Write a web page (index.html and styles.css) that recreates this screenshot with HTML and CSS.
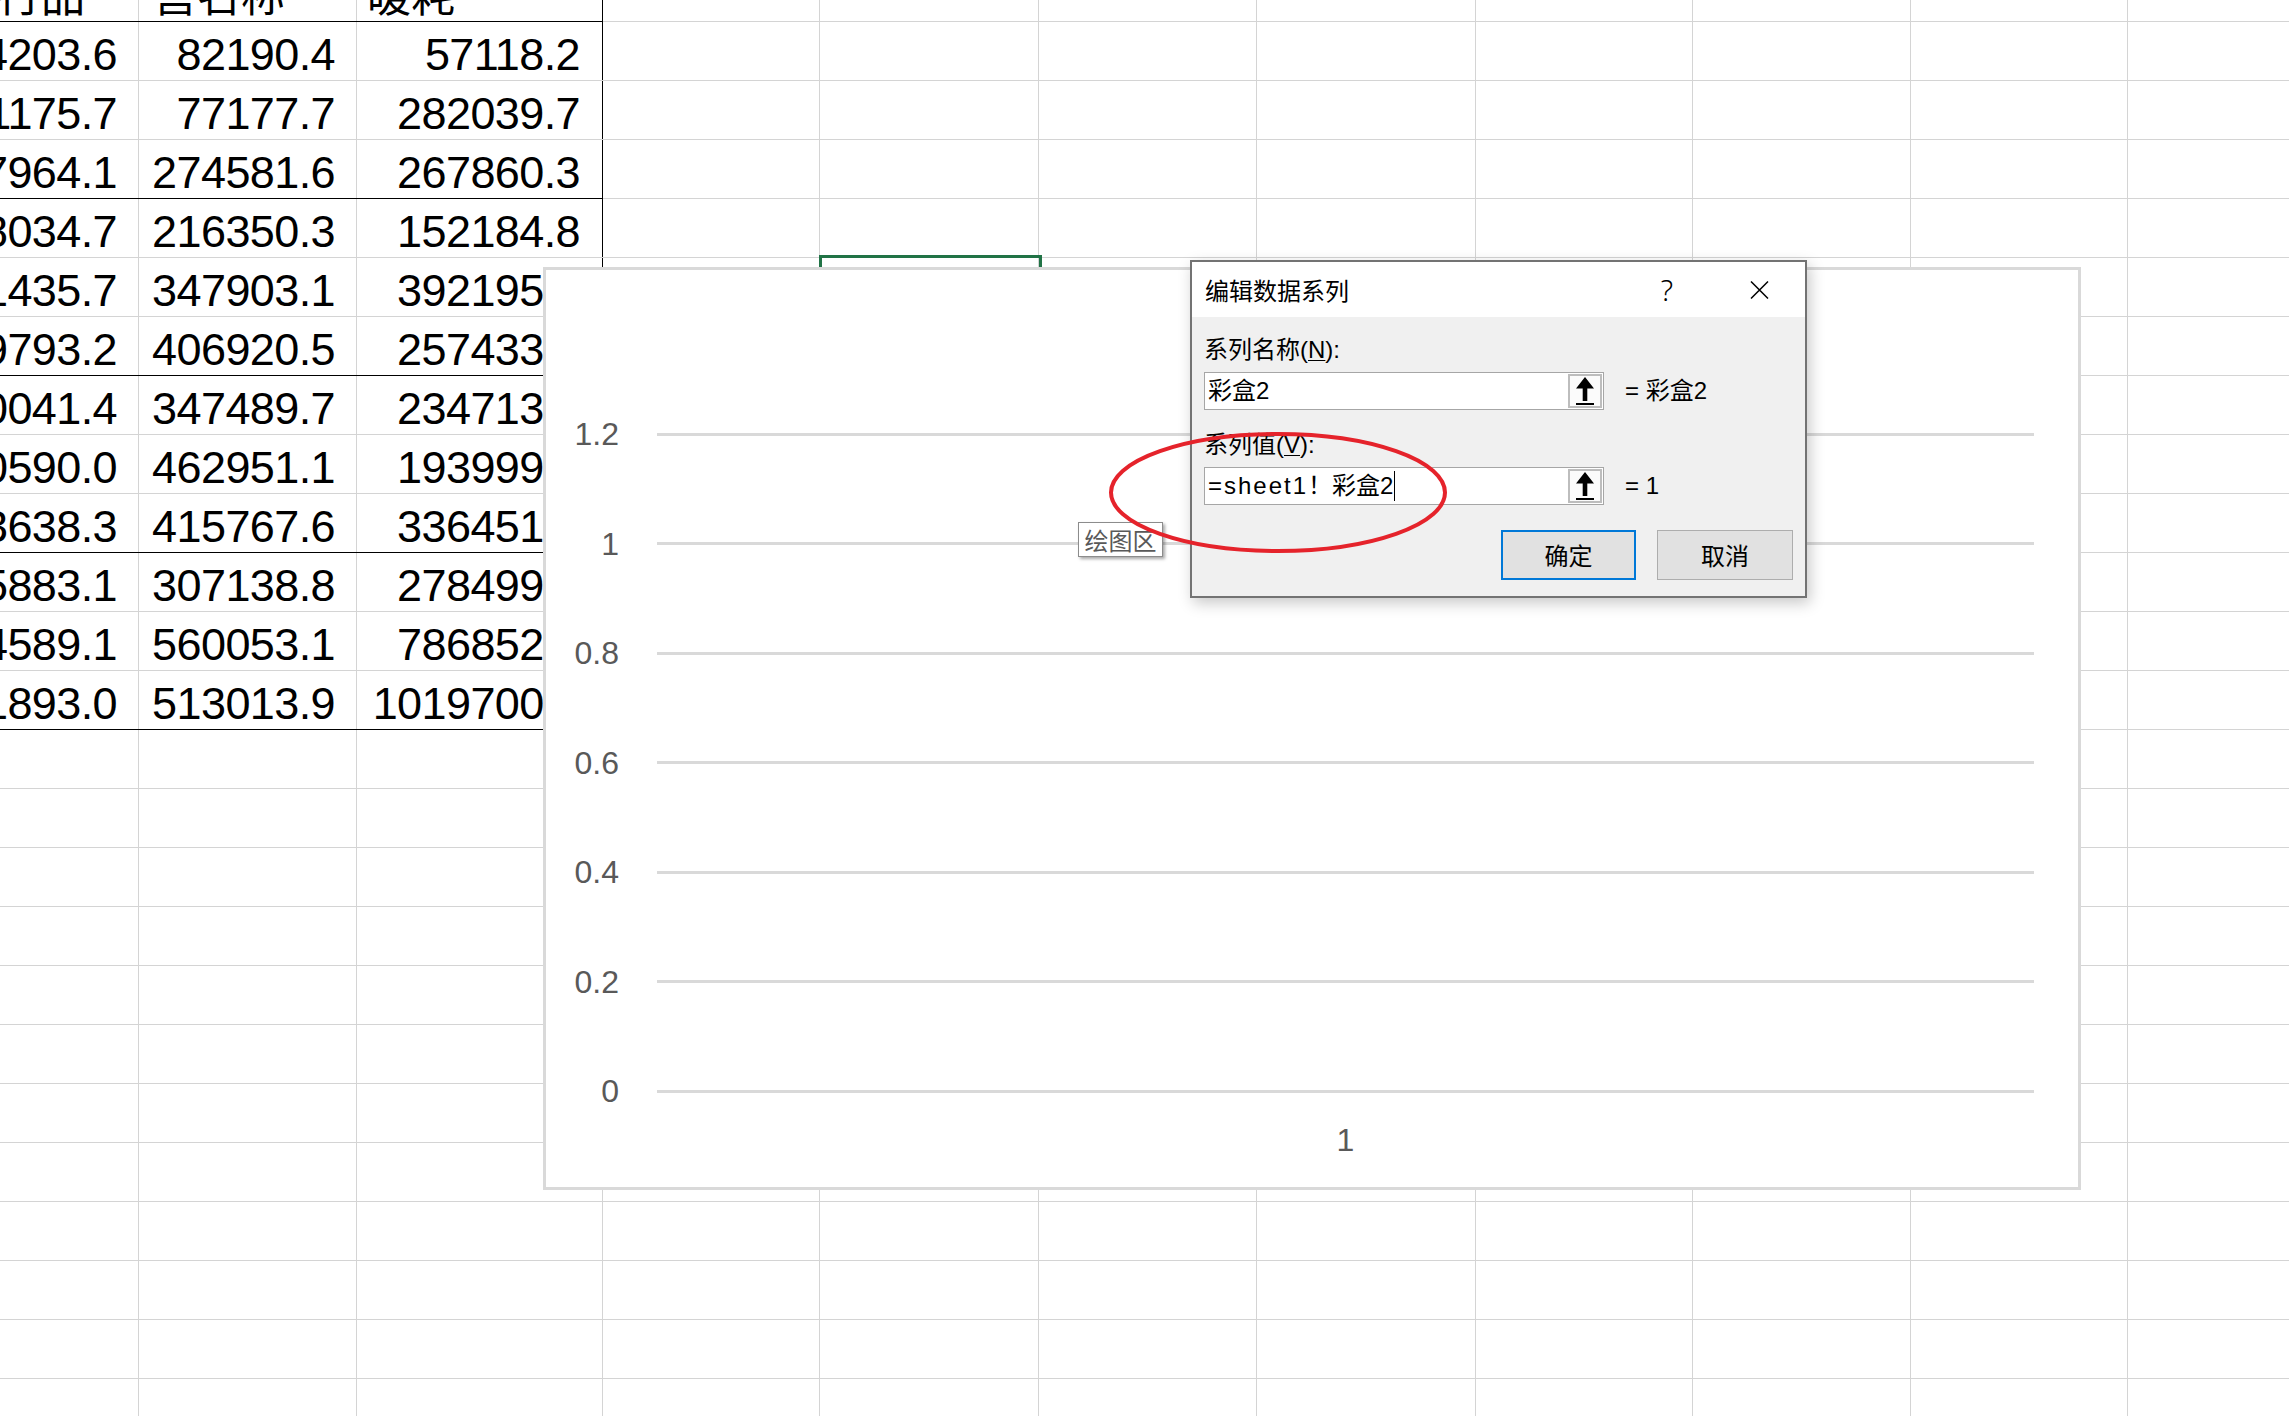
FILE: index.html
```html
<!DOCTYPE html>
<html lang="zh-CN">
<head>
<meta charset="utf-8">
<title>编辑数据系列</title>
<link rel="stylesheet" href="styles.css">
</head>
<body>
<main class="sheet">
  <div class="table">
    <div class="row sep">
      <div class="cell hd hd-a">发行品</div>
      <div class="cell hd hd-b">营名称</div>
      <div class="cell hd hd-c">暖耗</div>
    </div>
    <div class="row"><div class="cell">134203.6</div><div class="cell">82190.4</div><div class="cell">57118.2</div></div>
    <div class="row"><div class="cell">101175.7</div><div class="cell">77177.7</div><div class="cell">282039.7</div></div>
    <div class="row sep"><div class="cell">127964.1</div><div class="cell">274581.6</div><div class="cell">267860.3</div></div>
    <div class="row"><div class="cell">138034.7</div><div class="cell">216350.3</div><div class="cell">152184.8</div></div>
    <div class="row"><div class="cell">171435.7</div><div class="cell">347903.1</div><div class="cell">392195.2</div></div>
    <div class="row sep"><div class="cell">159793.2</div><div class="cell">406920.5</div><div class="cell">257433.8</div></div>
    <div class="row"><div class="cell">180041.4</div><div class="cell">347489.7</div><div class="cell">234713.5</div></div>
    <div class="row"><div class="cell">190590.0</div><div class="cell">462951.1</div><div class="cell">193999.6</div></div>
    <div class="row sep"><div class="cell">183638.3</div><div class="cell">415767.6</div><div class="cell">336451.9</div></div>
    <div class="row"><div class="cell">165883.1</div><div class="cell">307138.8</div><div class="cell">278499.4</div></div>
    <div class="row"><div class="cell">214589.1</div><div class="cell">560053.1</div><div class="cell">786852.7</div></div>
    <div class="row sep"><div class="cell">231893.0</div><div class="cell">513013.9</div><div class="cell">1019700.1</div></div>
  </div>
  <div class="selection"></div>
</main>

<section class="chart">
  <div class="plot">
    <div class="tick"><span class="tick-label">1.2</span><span class="tick-line"></span></div>
    <div class="tick"><span class="tick-label">1</span><span class="tick-line"></span></div>
    <div class="tick"><span class="tick-label">0.8</span><span class="tick-line"></span></div>
    <div class="tick"><span class="tick-label">0.6</span><span class="tick-line"></span></div>
    <div class="tick"><span class="tick-label">0.4</span><span class="tick-line"></span></div>
    <div class="tick"><span class="tick-label">0.2</span><span class="tick-line"></span></div>
    <div class="tick"><span class="tick-label">0</span><span class="tick-line"></span></div>
    <div class="category">1</div>
  </div>
  <div class="plot-tag">绘图区</div>
</section>

<section class="dialog">
  <header class="dlg-title">
    <h1>编辑数据系列</h1>
    <span class="help">?</span>
    <span class="close"><svg width="19" height="18" viewBox="0 0 19 18"><path d="M1 0.5L18 17.5M18 0.5L1 17.5" stroke="#000" stroke-width="1.5" fill="none"/></svg></span>
  </header>
  <div class="dlg-body">
    <div class="dlg-label">系列名称(<u>N</u>):</div>
    <div class="field-row">
      <div class="field">
        <span class="field-text">彩盒2</span>
        <span class="ref-btn"><svg width="30" height="30" viewBox="0 0 30 30"><path d="M15 1L24 12.5H17.3V25H12.7V12.5H6Z" fill="#000"/><rect x="6" y="27" width="18" height="2" fill="#000"/></svg></span>
      </div>
      <span class="field-eq">= 彩盒2</span>
    </div>
    <div class="dlg-label dlg-label-2">系列值(<u>V</u>):</div>
    <div class="field-row">
      <div class="field">
        <span class="field-text"><span class="ref">=sheet1</span>！彩盒2<span class="caret"></span></span>
        <span class="ref-btn"><svg width="30" height="30" viewBox="0 0 30 30"><path d="M15 1L24 12.5H17.3V25H12.7V12.5H6Z" fill="#000"/><rect x="6" y="27" width="18" height="2" fill="#000"/></svg></span>
      </div>
      <span class="field-eq">= 1</span>
    </div>
    <div class="dlg-buttons">
      <button class="btn btn-primary">确定</button>
      <button class="btn">取消</button>
    </div>
  </div>
</section>

<svg class="annotation" width="345" height="128" viewBox="0 0 345 128"><ellipse cx="172" cy="63.5" rx="167" ry="58.5" fill="none" stroke="#e5232b" stroke-width="4"/></svg>
</body>
</html>
```

FILE: styles.css
```css
html, body {
  margin: 0;
  padding: 0;
}

body {
  position: relative;
  width: 2289px;
  height: 1416px;
  overflow: hidden;
  background: #ffffff;
  font-family: "Liberation Sans", "Noto Sans CJK SC", sans-serif;
  color: #000;
}

/* ---------- spreadsheet ---------- */
.sheet {
  position: relative;
  margin-top: -37px;
  height: 1453px;
  background:
    linear-gradient(#d4d4d4, #d4d4d4) 138px 0 / 1px 100% no-repeat,
    linear-gradient(#d4d4d4, #d4d4d4) 356px 0 / 1px 100% no-repeat,
    linear-gradient(#d4d4d4, #d4d4d4) 602px 0 / 1px 100% no-repeat,
    linear-gradient(#d4d4d4, #d4d4d4) 819px 0 / 1px 100% no-repeat,
    linear-gradient(#d4d4d4, #d4d4d4) 1038px 0 / 1px 100% no-repeat,
    linear-gradient(#d4d4d4, #d4d4d4) 1256px 0 / 1px 100% no-repeat,
    linear-gradient(#d4d4d4, #d4d4d4) 1475px 0 / 1px 100% no-repeat,
    linear-gradient(#d4d4d4, #d4d4d4) 1692px 0 / 1px 100% no-repeat,
    linear-gradient(#d4d4d4, #d4d4d4) 1910px 0 / 1px 100% no-repeat,
    linear-gradient(#d4d4d4, #d4d4d4) 2127px 0 / 1px 100% no-repeat,
    repeating-linear-gradient(to bottom, transparent 0, transparent 58px, #d4d4d4 58px, #d4d4d4 59px);
}

.table {
  display: flex;
  flex-direction: column;
  width: 603px;
}

.row {
  display: grid;
  grid-template-columns: 139px 218px 246px;
  height: 59px;
  box-sizing: border-box;
  border-bottom: 1px solid transparent;
}

.row.sep {
  border-bottom-color: #000;
}

.cell {
  display: flex;
  align-items: flex-end;
  justify-content: flex-end;
  box-sizing: border-box;
  padding: 0 22px 3px 0;
  font-size: 45px;
  line-height: 45px;
  letter-spacing: -0.6px;
  white-space: nowrap;
  min-width: 0;
}

.row .cell:last-child {
  border-right: 1px solid #000;
}

.hd {
  font-family: "Noto Sans CJK SC", sans-serif;
  font-size: 44px;
  line-height: 44px;
  letter-spacing: 0;
  padding-bottom: 6px;
}

.hd-a {
  justify-content: flex-end;
  padding-right: 54px;
}

.hd-b {
  justify-content: flex-start;
  padding-left: 14px;
  padding-right: 0;
}

.hd-c {
  justify-content: flex-start;
  padding-left: 10px;
  padding-right: 0;
}

.selection {
  position: absolute;
  left: 819px;
  top: 292px;
  width: 223px;
  height: 70px;
  box-sizing: border-box;
  border: 3px solid #217346;
}

/* ---------- chart ---------- */
.chart {
  position: absolute;
  left: 543px;
  top: 267px;
  width: 1538px;
  height: 923px;
  box-sizing: border-box;
  border: 3px solid #d9d9d9;
  background: #fff;
}

.plot {
  padding-top: 109.25px;
}

.tick {
  display: flex;
  align-items: center;
  height: 109.5px;
}

.tick-label {
  width: 73px;
  text-align: right;
  font-size: 32px;
  line-height: 32px;
  color: #595959;
}

.tick-line {
  margin-left: 38px;
  width: 1377px;
  height: 3px;
  background: #d9d9d9;
}

.category {
  margin-top: -22px;
  margin-left: 111px;
  width: 1377px;
  text-align: center;
  font-size: 32px;
  line-height: 32px;
  color: #595959;
}

.plot-tag {
  position: absolute;
  left: 532px;
  top: 252px;
  width: 85px;
  height: 35px;
  box-sizing: border-box;
  border: 1px solid #8c8c8c;
  background: #fff;
  box-shadow: 2px 2px 3px rgba(0, 0, 0, 0.35);
  font-family: "Noto Sans CJK SC", sans-serif;
  font-size: 24px;
  line-height: 33px;
  text-align: center;
  color: #595959;
}

/* ---------- dialog ---------- */
.dialog {
  position: absolute;
  left: 1190px;
  top: 260px;
  width: 617px;
  height: 338px;
  box-sizing: border-box;
  border: 2px solid #737373;
  background: #f0f0f0;
  box-shadow: 3px 5px 14px rgba(0, 0, 0, 0.22);
  font-family: "Liberation Sans", "Noto Sans CJK SC", sans-serif;
  font-size: 24px;
  color: #000;
}

.dlg-title {
  display: flex;
  align-items: center;
  height: 55px;
  padding-left: 13px;
  background: #fff;
}

.dlg-title h1 {
  flex: 1;
  margin: 0;
  font-family: "Noto Sans CJK SC", sans-serif;
  font-size: 24px;
  font-weight: normal;
  line-height: 30px;
}

.help {
  width: 46px;
  margin-right: 46px;
  text-align: center;
  font-family: "Noto Sans", "DejaVu Sans", sans-serif;
  font-size: 29px;
  font-weight: 300;
  line-height: 30px;
}

.close {
  display: flex;
  justify-content: center;
  align-items: center;
  width: 46px;
  height: 30px;
  margin-right: 23px;
}

.dlg-body {
  padding: 18px 12px 16px 12px;
}

.dlg-label {
  line-height: 30px;
  height: 30px;
  margin-bottom: 7px;
}

.dlg-label u {
  text-decoration-thickness: 1px;
  text-underline-offset: 2px;
}

.dlg-label-2 {
  margin-top: 20px;
}

.field-row {
  display: flex;
  align-items: center;
}

.field {
  display: flex;
  width: 400px;
  height: 38px;
  box-sizing: border-box;
  border: 1px solid #a6a6a6;
  background: #fff;
}

.field-text {
  flex: 1;
  display: flex;
  align-items: center;
  padding-left: 3px;
  line-height: 36px;
  white-space: nowrap;
}

.ref {
  letter-spacing: 2px;
}

.caret {
  display: inline-block;
  width: 1px;
  height: 30px;
  margin-left: 1px;
  background: #000;
}

.ref-btn {
  display: flex;
  width: 34px;
  height: 34px;
  margin: 1px 1px 1px 0;
  box-sizing: border-box;
  border: 2px solid #bdbdbd;
  background: #fbfbfb;
}

.field-eq {
  margin-left: 21px;
  line-height: 36px;
  white-space: nowrap;
}

.dlg-buttons {
  display: flex;
  justify-content: flex-end;
  gap: 21px;
  margin-top: 25px;
}

.btn {
  width: 136px;
  height: 50px;
  box-sizing: border-box;
  margin: 0;
  padding: 0;
  border: 1px solid #adadad;
  background: #e1e1e1;
  font-family: "Noto Sans CJK SC", sans-serif;
  font-size: 24px;
  line-height: 30px;
  color: #000;
}

.btn-primary {
  width: 135px;
  border: 2px solid #0078d7;
}

/* ---------- annotation ---------- */
.annotation {
  position: absolute;
  left: 1106px;
  top: 429px;
}
```
